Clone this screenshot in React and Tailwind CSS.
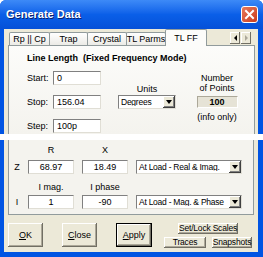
import React from 'react'

const font = { fontFamily: '"Liberation Sans", Arial, sans-serif' }

function Field({ value, w = 'w-[48px]', align = 'text-left' }) {
  return (
    <div className={`${w} h-[14px] bg-white border border-t-[#808080] border-l-[#808080] border-b-[#e0ded5] border-r-[#e0ded5] flex items-center px-[3px] text-[9px] leading-none text-black ${align}`}>
      <span className="w-full">{value}</span>
    </div>
  )
}

function Select({ value, w }) {
  return (
    <div className={`${w} h-[14px] bg-white border border-t-[#808080] border-l-[#808080] border-b-[#e0ded5] border-r-[#e0ded5] flex items-center text-[8.5px] tracking-[-0.25px] leading-none text-black`}>
      <span className="flex-1 pl-[2px] whitespace-nowrap overflow-hidden">{value}</span>
      <div className="w-[12px] h-[12px] bg-[#ece9d8] shadow-[inset_-1px_-1px_#404040,inset_1px_1px_#fff,inset_-2px_-2px_#808080] flex items-center justify-center">
        <div className="w-0 h-0 border-l-[3px] border-r-[3px] border-t-[4px] border-l-transparent border-r-transparent border-t-black" />
      </div>
    </div>
  )
}

function Button({ children, cls, def, small }) {
  return (
    <div className={`${cls} ${def ? 'border border-black' : ''} ${small ? 'text-[8.5px] tracking-[-0.2px]' : 'text-[9px]'} bg-[#ece9d8] flex items-center justify-center leading-none text-black whitespace-nowrap`}>
      <div className="w-full h-full shadow-[inset_-1px_-1px_#716f64,inset_1px_1px_#fff,inset_-2px_-2px_#aca899] flex items-center justify-center">
        {children}
      </div>
    </div>
  )
}

const tabs = ['Rp || Cp', 'Trap', 'Crystal', 'TL Parms']
const tabW = ['w-[41px]', 'w-[39px]', 'w-[40px]', 'w-[40px]']

export default function App() {
  return (
    <div className="w-[263px] h-[257px] flex flex-col overflow-hidden bg-white select-none" style={font}>
      {/* upper half of the window */}
      <div className="h-[134px] flex flex-col bg-[#0054e3] rounded-t-[6px]">
        <div className="h-[29px] flex items-center justify-between pl-[6px] pr-[5px] rounded-t-[6px] bg-gradient-to-b from-[#3d8af7] via-[#0a5fe8] to-[#0550d8]">
          <span className="text-white font-bold text-[11px] [text-shadow:1px_1px_#0a1e6a]">
            Generate Data
          </span>
          <div className="w-[17px] h-[17px] rounded-[3px] border border-white bg-gradient-to-br from-[#e8795a] to-[#c8391a] flex items-center justify-center">
            <svg width="11" height="11" viewBox="0 0 11 11">
              <path d="M2 2 L9 9 M9 2 L2 9" stroke="white" strokeWidth="2" strokeLinecap="square" />
            </svg>
          </div>
        </div>
        <div className="flex-1 flex mx-[4px] mr-[5px] bg-[#ece9d8] flex-col pl-[4px] pr-[3px]">
          {/* tab strip */}
          <div className="h-[16px] flex items-end relative">
            <div className="w-[1px]" />
            {tabs.map((t, i) => (
              <div key={t} className={`${tabW[i]} h-[13px] border-t border-l border-r border-[#919b9c] rounded-t-[2px] bg-gradient-to-b from-white to-[#ecebe6] flex items-center justify-center text-[9px] leading-none text-black whitespace-nowrap -mr-[1px]`}>
                {t}
              </div>
            ))}
            <div className="w-[42px] h-[17px] border-t border-l border-r border-[#919b9c] rounded-t-[2px] bg-[#fcfcfa] flex items-center justify-center text-[9px] leading-none text-black relative z-10 -mb-[1px]">
              TL FF
            </div>
            <div className="flex-1 h-full flex justify-end items-start pt-[3px] pr-[4px] gap-[1px]">
              <div className="w-[10px] h-[12px] bg-[#ece9d8] shadow-[inset_-1px_-1px_#716f64,inset_1px_1px_#fff] flex items-center justify-center">
                <div className="w-0 h-0 border-t-[3px] border-b-[3px] border-r-[3px] border-t-transparent border-b-transparent border-r-black" />
              </div>
              <div className="w-[10px] h-[12px] bg-[#ece9d8] shadow-[inset_-1px_-1px_#716f64,inset_1px_1px_#fff] flex items-center justify-center">
                <div className="w-0 h-0 border-t-[3px] border-b-[3px] border-l-[3px] border-t-transparent border-b-transparent border-l-[#aca899]" />
              </div>
            </div>
          </div>
          {/* tab panel */}
          <div className="flex-1 border-t border-l border-r border-[#919b9c] bg-gradient-to-b from-[#fcfcfa] to-[#f4f3ee] pl-[18px] pt-[6px] text-[9px] leading-none text-black">
            <div className="h-[12px] font-bold whitespace-pre flex items-center">Line Length  (Fixed Frequency Mode)</div>
            <div className="flex mt-[7px]">
              <div className="flex flex-col gap-[10px]">
                {[['Start:', '0'], ['Stop:', '156.04'], ['Step:', '100p']].map(([l, v]) => (
                  <div key={l} className="flex items-center">
                    <span className="w-[26px]">{l}</span>
                    <Field value={v} />
                  </div>
                ))}
              </div>
              <div className="ml-[17px] w-[58px] flex flex-col items-center pt-[12px]">
                <span className="h-[12px] flex items-center">Units</span>
                <Select value="Degrees" w="w-[58px]" />
              </div>
              <div className="ml-[16px] w-[50px] flex flex-col items-center pt-[2px]">
                <span className="h-[10px] flex items-center">Number</span>
                <span className="h-[10px] flex items-center">of Points</span>
                <div className="mt-[3px] w-[41px] h-[12px] bg-[#e6e3d6] border border-t-[#aca899] border-l-[#aca899] border-b-white border-r-white flex items-center justify-center font-bold">
                  100
                </div>
                <span className="mt-[4px] h-[10px] flex items-center">(info only)</span>
              </div>
            </div>
          </div>
        </div>
      </div>

      {/* gap band */}
      <div className="h-[6px] bg-white" />

      {/* lower half of the window */}
      <div className="flex-1 flex flex-col bg-[#0054e3]">
        <div className="flex-1 mx-[4px] mr-[5px] mb-[5px] bg-[#ece9d8] pl-[4px] pr-[4px] flex flex-col text-[9px] leading-none text-black">
          <div className="h-[75px] border-l border-r border-b border-[#919b9c] bg-[#f4f3ee] pl-[5px] flex flex-col">
            <div className="flex mt-[5px] h-[10px] items-center">
              <span className="w-[14px]" />
              <span className="w-[46px] text-center">R</span>
              <span className="w-[8px]" />
              <span className="w-[46px] text-center">X</span>
            </div>
            <div className="flex mt-[5px] items-center gap-[8px]">
              <span className="w-[6px] text-center">Z</span>
              <Field value="68.97" w="w-[46px]" align="text-center" />
              <Field value="18.49" w="w-[46px]" align="text-center" />
              <Select value="At Load - Real & Imag." w="w-[106px]" />
            </div>
            <div className="flex mt-[8px] h-[10px] items-center">
              <span className="w-[14px]" />
              <span className="w-[46px] text-center">I mag.</span>
              <span className="w-[8px]" />
              <span className="w-[46px] text-center">I phase</span>
            </div>
            <div className="flex mt-[3px] items-center gap-[8px]">
              <span className="w-[6px] text-center">I</span>
              <Field value="1" w="w-[46px]" align="text-center" />
              <Field value="-90" w="w-[46px]" align="text-center" />
              <Select value="At Load - Mag. & Phase" w="w-[106px]" />
            </div>
          </div>
          <div className="flex mt-[8px]">
            <Button cls="w-[35px] h-[24px]"><span><u>O</u>K</span></Button>
            <Button cls="w-[35px] h-[24px] ml-[19px]"><span><u>C</u>lose</span></Button>
            <Button cls="w-[36px] h-[24px] ml-[19px]" def><span><u>A</u>pply</span></Button>
            <div className="ml-[12px] flex flex-col items-center gap-[3px]">
              <Button cls="w-[60px] h-[11px]" small><span>Set/Lock Scales</span></Button>
              <div className="flex gap-[6px]">
                <Button cls="w-[42px] h-[11px]" small><span>Traces</span></Button>
                <Button cls="w-[40px] h-[11px]" small><span>Snapshots</span></Button>
              </div>
            </div>
          </div>
        </div>
      </div>
    </div>
  )
}
